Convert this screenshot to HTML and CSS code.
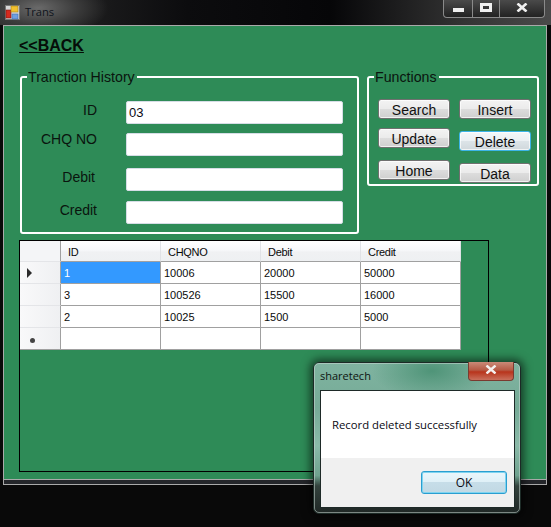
FILE: index.html
```html
<!DOCTYPE html>
<html lang="en">
<head>
<meta charset="utf-8">
<title>Trans</title>
<link rel="stylesheet" href="styles.css">
</head>
<body>
<div class="desktop">
  <header class="titlebar">
    <svg class="app-icon" width="15" height="15" viewBox="0 0 15 15">
      <rect x="0.5" y="0.5" width="14" height="14" fill="#d8d8d8" stroke="#777"/>
      <rect x="1" y="5" width="5" height="8" fill="#d62a1e" stroke="#7a1410" stroke-width=".6"/>
      <rect x="6" y="1" width="7" height="6" fill="#f2c02e" stroke="#a5801a" stroke-width=".6"/>
      <rect x="7" y="9" width="6" height="5" fill="#6f9fe0" stroke="#3e6cb0" stroke-width=".6"/>
    </svg>
    <span class="window-title">Trans</span>
    <div class="caption">
      <span class="cap cap-min"><svg width="11" height="4"><rect width="11" height="4" fill="#f0f0f0"/></svg></span>
      <span class="cap cap-max"><svg width="12" height="9"><rect x="1.5" y="1.5" width="9" height="6" fill="none" stroke="#f0f0f0" stroke-width="3"/></svg></span>
      <span class="cap cap-close"><svg width="12" height="9"><path d="M1.5 .5 10.5 8.5M10.5 .5 1.5 8.5" stroke="#f0f0f0" stroke-width="2.6" fill="none"/></svg></span>
    </div>
  </header>

  <div class="window">
    <main class="client">
      <a class="back" href="#">&lt;&lt;BACK</a>
      <div class="groups">
        <fieldset class="group group-history">
          <legend>Tranction History</legend>
          <div class="form">
            <label class="lbl lbl-id">ID</label><div class="input">03</div>
            <label class="lbl lbl-chq">CHQ NO</label><div class="input"></div>
            <label class="lbl lbl-debit">Debit</label><div class="input"></div>
            <label class="lbl lbl-credit">Credit</label><div class="input"></div>
          </div>
        </fieldset>
        <fieldset class="group group-functions">
          <legend>Functions</legend>
          <div class="btn-cols">
            <div class="btn-col btn-col-left">
              <button class="btn">Search</button>
              <button class="btn">Update</button>
              <button class="btn">Home</button>
            </div>
            <div class="btn-col btn-col-right">
              <button class="btn">Insert</button>
              <button class="btn btn-focus">Delete</button>
              <button class="btn">Data</button>
            </div>
          </div>
        </fieldset>
      </div>
      <div class="grid-panel">
        <table class="grid">
          <thead>
            <tr><th class="rowhead"></th><th>ID</th><th>CHQNO</th><th>Debit</th><th>Credit</th></tr>
          </thead>
          <tbody>
            <tr><td class="rowhead"><span class="arrow"></span></td><td class="selected">1</td><td>10006</td><td>20000</td><td>50000</td></tr>
            <tr><td class="rowhead"></td><td>3</td><td>100526</td><td>15500</td><td>16000</td></tr>
            <tr><td class="rowhead"></td><td>2</td><td>10025</td><td>1500</td><td>5000</td></tr>
            <tr><td class="rowhead"><span class="newrow"></span></td><td></td><td></td><td></td><td></td></tr>
          </tbody>
        </table>
      </div>
    </main>
  </div>

  <div class="dialog">
    <div class="dialog-title">sharetech</div>
    <span class="dialog-close"><svg width="12" height="9"><path d="M1.5 .5 10.5 8.5M10.5 .5 1.5 8.5" stroke="#f4f0ee" stroke-width="2.4" fill="none"/></svg></span>
    <div class="dialog-inner">
      <div class="dialog-body">Record deleted successfully</div>
      <div class="dialog-foot"><button class="ok">OK</button></div>
    </div>
  </div>
</div>
</body>
</html>
```
FILE: styles.css
```css
* { box-sizing: border-box; }
html, body { margin: 0; padding: 0; background: #090909; }
.desktop {
  position: relative;
  width: 551px;
  height: 527px;
  overflow: hidden;
  background: #090909;
  font-family: "Liberation Sans", Arial, sans-serif;
  color: #0a140e;
}

/* title bar */
.titlebar {
  height: 25px;
  display: flex;
  align-items: flex-start;
  background:
    radial-gradient(ellipse 70px 30px at 38px 8px, #6a6a6a 0%, #3c3c3c 55%, rgba(20,20,20,0) 100%),
    linear-gradient(90deg, #2a2a2a 0, #0c0c0e 34%, #060608 60%, #333 84%, #4a4a4a 100%);
}
.app-icon { margin: 5px 0 0 5px; }
.window-title {
  margin: 4px 0 0 5px;
  font: 11.2px "Open Sans", sans-serif;
  color: #10141c;
}
.caption {
  margin-left: auto;
  margin-right: 6px;
  width: 102px;
  height: 18px;
  display: flex;
  border: 1px solid #8a8a8a;
  border-top: 0;
  border-radius: 0 0 4px 4px;
  background: linear-gradient(#4a4a4a, #222);
}
.cap { display: flex; align-items: center; justify-content: center; height: 100%; }
.cap-min { width: 29px; border-right: 1px solid #8a8a8a; padding-top: 3px; }
.cap-max { width: 27px; border-right: 1px solid #8a8a8a; padding-bottom: 2px; }
.cap-close { flex: 1; padding-bottom: 2px; }

/* main window */
.window {
  margin: 0 4px 0 3px;
  height: 460px;
  border: 1px solid #a9a9a9;
  border-bottom: 0;
  box-shadow: inset 0 -1px 0 #a9a9a9, inset 0 -5px 0 #24262a;
  position: relative;
}
.client {
  height: 454px;
  border-bottom: 1px solid #a9a9a9;
  background: #2e8b57;
  padding: 11px 0 0 15px;
  display: flex;
  flex-direction: column;
  align-items: flex-start;
}

.back {
  font-size: 16px;
  font-weight: 700;
  line-height: 18px;
  color: #050d08;
  text-decoration: underline;
}

.groups { display: flex; gap: 8px; margin: 14px 0 0 1px; }
.group {
  margin: 0;
  padding: 0;
  border: 2px solid #fff;
  border-radius: 3px;
  min-width: 0;
}
.group legend {
  font-size: 14.2px;
  line-height: 16px;
  padding: 0 2px 0 1px;
  margin-left: 5px;
  color: #0a140e;
}
.group-history { width: 339px; height: 165px; }
.group-functions { width: 172px; height: 117px; }

/* form */
.form {
  display: grid;
  grid-template-columns: 75px 217px;
  column-gap: 29px;
  grid-template-rows: 32px 35px 33px 23px;
  margin-top: 16px;
}
.lbl { font-size: 14px; line-height: 16px; text-align: right; }
.lbl-id { padding-top: 1px; }
.lbl-chq { margin-top: -2px; }
.lbl-debit { padding-top: 1px; padding-right: 2px; }
.lbl-credit { padding-top: 1px; }
.input {
  height: 23px;
  background: #fff;
  border: 1px solid #d6dde6;
  border-radius: 2px;
  padding: 3px 0 0 2px;
  font-size: 13px;
  line-height: 16px;
  color: #0a0a14;
}

/* buttons */
.btn-cols { display: flex; gap: 9px; margin: 14px 0 0 9px; }
.btn-col { display: flex; flex-direction: column; }
.btn-col-left { gap: 9px; }
.btn-col-left .btn:nth-child(3) { margin-top: 3px; }
.btn-col-right .btn:nth-child(2) { margin-top: 12px; }
.btn-col-right .btn:nth-child(3) { margin-top: 12px; }
.btn {
  width: 72px;
  height: 20px;
  padding: 2px 0 0;
  font: 14px/16px "Liberation Sans", Arial, sans-serif;
  color: #101010;
  border: 1px solid #707070;
  border-radius: 3px;
  background: linear-gradient(#f3f3f3 0, #ebebeb 48%, #dddddd 50%, #cfcfcf 100%);
  box-shadow: inset 0 0 0 1px rgba(255,255,255,.7);
}
.btn-focus {
  border-color: #3cb4e8;
  background: linear-gradient(#f4f7f9 0, #ebf0f3 48%, #dde4e8 50%, #d0d8dc 100%);
}

/* data grid */
.grid-panel {
  width: 470px;
  height: 232px;
  margin-top: 6px;
  border: 1px solid #000;
}
.grid {
  border-collapse: separate;
  border-spacing: 0;
  table-layout: fixed;
  width: 441px;
  font-size: 11px;
  color: #0a0a0a;
  background: #fff;
}
.grid th, .grid td {
  width: 100px;
  height: 22px;
  padding: 2px 0 0 3px;
  text-align: left;
  font-weight: 400;
  border-style: solid;
  border-color: #a0a0a0;
  border-width: 0 1px 1px 0;
  line-height: 13px;
  white-space: nowrap;
}
.grid thead th {
  height: 21px;
  padding-left: 7px;
  letter-spacing: -.3px;
  background: linear-gradient(#ffffff 0, #f7f8fa 45%, #f0f1f3 55%, #eef0f2 100%);
  border-right: 1px solid #e0e2e6;
  border-bottom: 1px solid #a0a0a0;
}
.grid .rowhead {
  width: 41px;
  padding: 0;
  background: linear-gradient(90deg, #f9f9fa, #eff0f2);
  border-bottom: 1px solid #e4e5e8;
  border-right: 1px solid #a0a0a0;
}
.grid tbody tr:last-child td { border-bottom-color: #a0a0a0; }
.grid thead .rowhead { background: #f4f5f7; }
.grid td.selected { background: #3399ff; color: #fff; }
.arrow {
  display: block;
  width: 0;
  height: 0;
  margin: 1px 0 0 7px;
  border-left: 5px solid #2b2b2b;
  border-top: 5px solid transparent;
  border-bottom: 5px solid transparent;
}
.newrow {
  display: block;
  width: 5px;
  height: 5px;
  margin: 3px 0 0 10px;
  border-radius: 50%;
  background: #444;
}

/* message box */
.dialog {
  position: absolute;
  left: 313px;
  top: 362px;
  width: 208px;
  height: 152px;
  padding: 27px 5px 6px 6px;
  border: 1px solid #1c2a26;
  outline: 1px solid rgba(200,215,210,.55);
  outline-offset: -2px;
  border-radius: 6px;
  background:
    radial-gradient(ellipse 60px 28px at 118px 8px, #4f9478 0, rgba(79,148,120,0) 100%),
    linear-gradient(#7fb3a0 0, #76ab97 30%, #8bbaa9 55%, #6fa28f 75%, #33423d 82%, #1f2725 100%);
  box-shadow: 0 0 8px 3px rgba(0,0,0,.55);
}
.dialog-title {
  position: absolute;
  left: 6px;
  top: 5px;
  font: 11px/16px "Open Sans", sans-serif;
  color: #0c1410;
}
.dialog-close {
  position: absolute;
  right: 6px;
  top: -1px;
  width: 46px;
  height: 19px;
  display: flex;
  align-items: center;
  justify-content: center;
  padding-bottom: 3px;
  border: 1px solid #7a3a30;
  border-top: 0;
  border-radius: 0 0 4px 4px;
  background: linear-gradient(#c98a78 0, #b65a44 45%, #b8341c 55%, #c9705c 100%);
}
.dialog-inner {
  height: 118px;
  display: flex;
  flex-direction: column;
  background: #fff;
  border: 1px solid #1e2a28;
}
.dialog-body {
  height: 67px;
  padding: 26px 0 0 11px;
  font: 11.3px/16px "Open Sans", sans-serif;
  color: #0a0a14;
}
.dialog-foot {
  flex: 1;
  background: #f0f0f0;
  display: flex;
  justify-content: flex-end;
  align-items: flex-start;
  padding: 13px 7px 0 0;
}
.ok {
  width: 86px;
  height: 23px;
  padding: 0;
  font: 12px/16px "Open Sans", sans-serif;
  color: #0a0a14;
  border: 1px solid #2a9ed0;
  border-radius: 3px;
  background: linear-gradient(#eaf6fb 0, #dff0f7 48%, #c6dde8 50%, #c2d9e4 100%);
  box-shadow: inset 0 0 0 1px #7fd4f0;
}
```
